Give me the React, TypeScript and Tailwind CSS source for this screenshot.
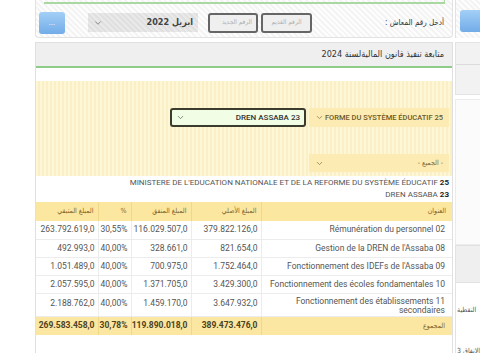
import React from 'react';
import { ChevronDown } from 'lucide-react';

const rows = [
  { rest: '263.792.619,0', pct: '30,55%', spent: '116.029.507,0', orig: '379.822.126,0', title: 'Rémunération du personnel 02' },
  { rest: '492.993,0', pct: '40,00%', spent: '328.661,0', orig: '821.654,0', title: "Gestion de la DREN de l'Assaba 08" },
  { rest: '1.051.489,0', pct: '40,00%', spent: '700.975,0', orig: '1.752.464,0', title: "Fonctionnement des IDEFs de l'Assaba 09" },
  { rest: '2.057.595,0', pct: '40,00%', spent: '1.371.705,0', orig: '3.429.300,0', title: 'Fonctionnement des écoles fondamentales 10' },
];

const hatch = 'bg-[repeating-linear-gradient(45deg,#f4f4f4_0px,#f4f4f4_2px,#fdfdfd_2px,#fdfdfd_4px)]';
const ar = "font-['DejaVu_Sans_Condensed','DejaVu_Sans',sans-serif]";

const App: React.FC = () => {
  return (
    <div className="w-[480px] h-[353px] overflow-hidden bg-white flex font-['Roboto','DejaVu_Sans',sans-serif] text-[#444]">
      <div className="w-[35px] shrink-0" />

      {/* main column */}
      <div className="w-[418px] shrink-0 flex flex-col">
        {/* top bar */}
        <div className={`h-[38px] shrink-0 rounded-b-[4px] border border-t-0 border-[#e2e2e2] ${hatch} flex flex-col`}>
          <div className="ml-[8px] mr-[7px] h-[4px] shrink-0 border-b-2 border-r border-[#a9d9a0]" />
          <div className="flex items-center flex-1 pl-[3px] pr-[8px] pt-[4px]">
            <button className="w-[26px] h-[22px] rounded-[3px] bg-gradient-to-b from-[#a3cff6] to-[#72ace8] text-white text-[8px] leading-none">...</button>
            <div className="ml-[23px] w-[110px] h-[19px] flex items-center justify-between px-[5px] bg-[repeating-linear-gradient(45deg,#e0e0e0_0px,#e0e0e0_2px,#e9e9e9_2px,#e9e9e9_4px)]">
              <ChevronDown className="w-[10px] h-[10px] text-[#777]" strokeWidth={2} />
              <span className={`text-[9px] font-bold text-[#444] ${ar}`}>2022 ابريل</span>
            </div>
            <div className={`ml-[10px] w-[50px] h-[20px] rounded-[3px] border-2 border-[#666] bg-[#efefef] flex items-center justify-end pr-[4px] text-[6.5px] text-[#b0b0b0] overflow-hidden whitespace-nowrap ${ar}`}>الرقم الجديد</div>
            <div className={`ml-[3px] w-[51px] h-[20px] rounded-[3px] border-2 border-[#666] bg-[#efefef] flex items-center justify-center text-[6.5px] text-[#b0b0b0] ${ar}`}>الرقم القديم</div>
            <div className="flex-1" />
            <span className={`text-[8px] text-[#333] ${ar}`} dir="rtl">أدخل رقم المعاش :</span>
          </div>
        </div>

        {/* main panel */}
        <div className="mt-[4px] border border-[#e0e0e0] border-b-0 flex-1 flex flex-col overflow-hidden">
          <div className="h-[25px] shrink-0 bg-[#efefef] border-b-2 border-[#8fcc8a] flex items-center justify-end pr-[8px]">
            <span className={`text-[9px] text-[#333] ${ar}`} dir="rtl">متابعة تنفيذ قانون الماليةلسنة 2024</span>
          </div>
          <div className="h-[13px] shrink-0" />

          {/* filters */}
          <div className="h-[95px] shrink-0 bg-[repeating-linear-gradient(90deg,#fdf7d6_0px,#fdf7d6_2px,#faefc6_2px,#faefc6_4px)] flex flex-col items-end pr-[3px] pt-[27px]">
            <div className="flex gap-[3px]">
              <div className="w-[136px] h-[19px] rounded-[3px] border-2 border-[#3b3b2e] bg-[#f2fde6] flex items-center justify-between px-[4px]">
                <ChevronDown className="w-[9px] h-[9px] text-[#666]" strokeWidth={2} />
                <span className="text-[8px] font-medium text-[#333] whitespace-nowrap">DREN ASSABA 23</span>
              </div>
              <div className="w-[140px] h-[19px] bg-[#fcebb2] flex items-center justify-between px-[6px]">
                <ChevronDown className="w-[9px] h-[9px] text-[#8a7a4a]" strokeWidth={2} />
                <span className="text-[7.5px] font-medium text-[#6b5a28] whitespace-nowrap">FORME DU SYSTÈME ÉDUCATIF 25</span>
              </div>
            </div>
            <div className="mt-[27px] w-[140px] h-[18px] bg-[#fcebb2] flex items-center justify-between px-[6px]">
              <ChevronDown className="w-[9px] h-[9px] text-[#8a7a4a]" strokeWidth={2} />
              <span className={`text-[7px] text-[#7a6a38] ${ar}`} dir="rtl">- الجميع -</span>
            </div>
          </div>

          {/* headings */}
          <div className="h-[26px] shrink-0 flex flex-col items-end justify-center pr-[3px] text-[8px] leading-[12px] text-[#555] whitespace-nowrap">
            <div>MINISTERE DE L'EDUCATION NATIONALE ET DE LA REFORME DU SYSTÈME ÉDUCATIF <b className="text-[#222]">25</b></div>
            <div>DREN ASSABA <b className="text-[#222]">23</b></div>
          </div>

          {/* table */}
          <table className="w-full shrink-0 border-collapse text-[8.5px] text-[#555] table-fixed">
            <colgroup>
              <col className="w-[62px]" />
              <col className="w-[33px]" />
              <col className="w-[60px]" />
              <col className="w-[70px]" />
              <col />
            </colgroup>
            <thead>
              <tr className={`h-[19px] bg-[#fce7a0] text-[#7e6228] text-[7px] ${ar}`}>
                <th className="font-normal text-right pr-[4px] border-r border-[#f0d88a]">المبلغ المتبقي</th>
                <th className="font-normal text-right pr-[4px] border-r border-[#f0d88a]">%</th>
                <th className="font-normal text-right pr-[4px] border-r border-[#f0d88a]">المبلغ المنفق</th>
                <th className="font-normal text-right pr-[4px] border-r border-[#f0d88a]">المبلغ الأصلي</th>
                <th className="font-normal text-right pr-[6px]">العنوان</th>
              </tr>
            </thead>
            <tbody>
              {rows.map((r, i) => (
                <tr key={i} className="h-[18px] border-b border-[#ececec]">
                  <td className="text-right pr-[3px] border-r border-[#ececec]">{r.rest}</td>
                  <td className="text-right pr-[3px] border-r border-[#ececec]">{r.pct}</td>
                  <td className="text-right pr-[3px] border-r border-[#ececec]">{r.spent}</td>
                  <td className="text-right pr-[3px] border-r border-[#ececec]">{r.orig}</td>
                  <td className="text-right pr-[7px] whitespace-nowrap">{r.title}</td>
                </tr>
              ))}
              <tr className="h-[23px] border-b border-[#ececec]">
                <td className="text-right pr-[3px] border-r border-[#ececec] align-top pt-[3px]">2.188.762,0</td>
                <td className="text-right pr-[3px] border-r border-[#ececec] align-top pt-[3px]">40,00%</td>
                <td className="text-right pr-[3px] border-r border-[#ececec] align-top pt-[3px]">1.459.170,0</td>
                <td className="text-right pr-[3px] border-r border-[#ececec] align-top pt-[3px]">3.647.932,0</td>
                <td className="text-right pr-[7px] leading-[9px] align-top pt-[3px]">
                  <div>Fonctionnement des établissements 11</div>
                  <div>secondaires</div>
                </td>
              </tr>
              <tr className="h-[19px] bg-[#fbe6a2] font-bold text-[#4e421e]">
                <td className="text-right pr-[3px] border-r border-[#f0d88a]">269.583.458,0</td>
                <td className="text-right pr-[3px] border-r border-[#f0d88a]">30,78%</td>
                <td className="text-right pr-[3px] border-r border-[#f0d88a]">119.890.018,0</td>
                <td className="text-right pr-[3px] border-r border-[#f0d88a]">389.473.476,0</td>
                <td className={`text-right pr-[7px] font-normal text-[7px] text-[#7e6228] ${ar}`}>المجموع</td>
              </tr>
            </tbody>
          </table>
        </div>
      </div>

      {/* right column (cut off by the window) */}
      <div className="ml-[2px] w-[200px] shrink-0 flex flex-col">
        <div className={`h-[38px] shrink-0 border-l border-[#e2e2e2] ${hatch} flex items-center pl-[4px] pt-[4px]`}>
          <div className="w-[40px] h-[22px] rounded-[3px] bg-gradient-to-b from-[#a3cff6] to-[#72ace8]" />
        </div>
        <div className="mt-[4px] h-[53px] shrink-0 bg-[#f2f2f2] border border-[#e4e4e4] flex flex-col">
          <div className="h-[22px] border-b border-[#dcdcdc]" />
        </div>
        <div className="mt-[4px] h-[146px] shrink-0 border border-[#ececec] bg-[#fbfbfb]" />
        <div className="h-[38px] shrink-0 bg-[#efefef] border border-[#e2e2e2]" />
        <div className={`border-l border-[#e2e2e2] flex-1 flex flex-col pt-[22px] text-[7px] text-[#555] ${ar}`}>
          <div className="whitespace-nowrap pl-[1px]"><span dir="rtl">النقطية</span></div>
          <div className="mt-[30px] whitespace-nowrap pl-[1px]"><span dir="rtl">الإنفاق 3</span></div>
        </div>
      </div>
    </div>
  );
};

export default App;
